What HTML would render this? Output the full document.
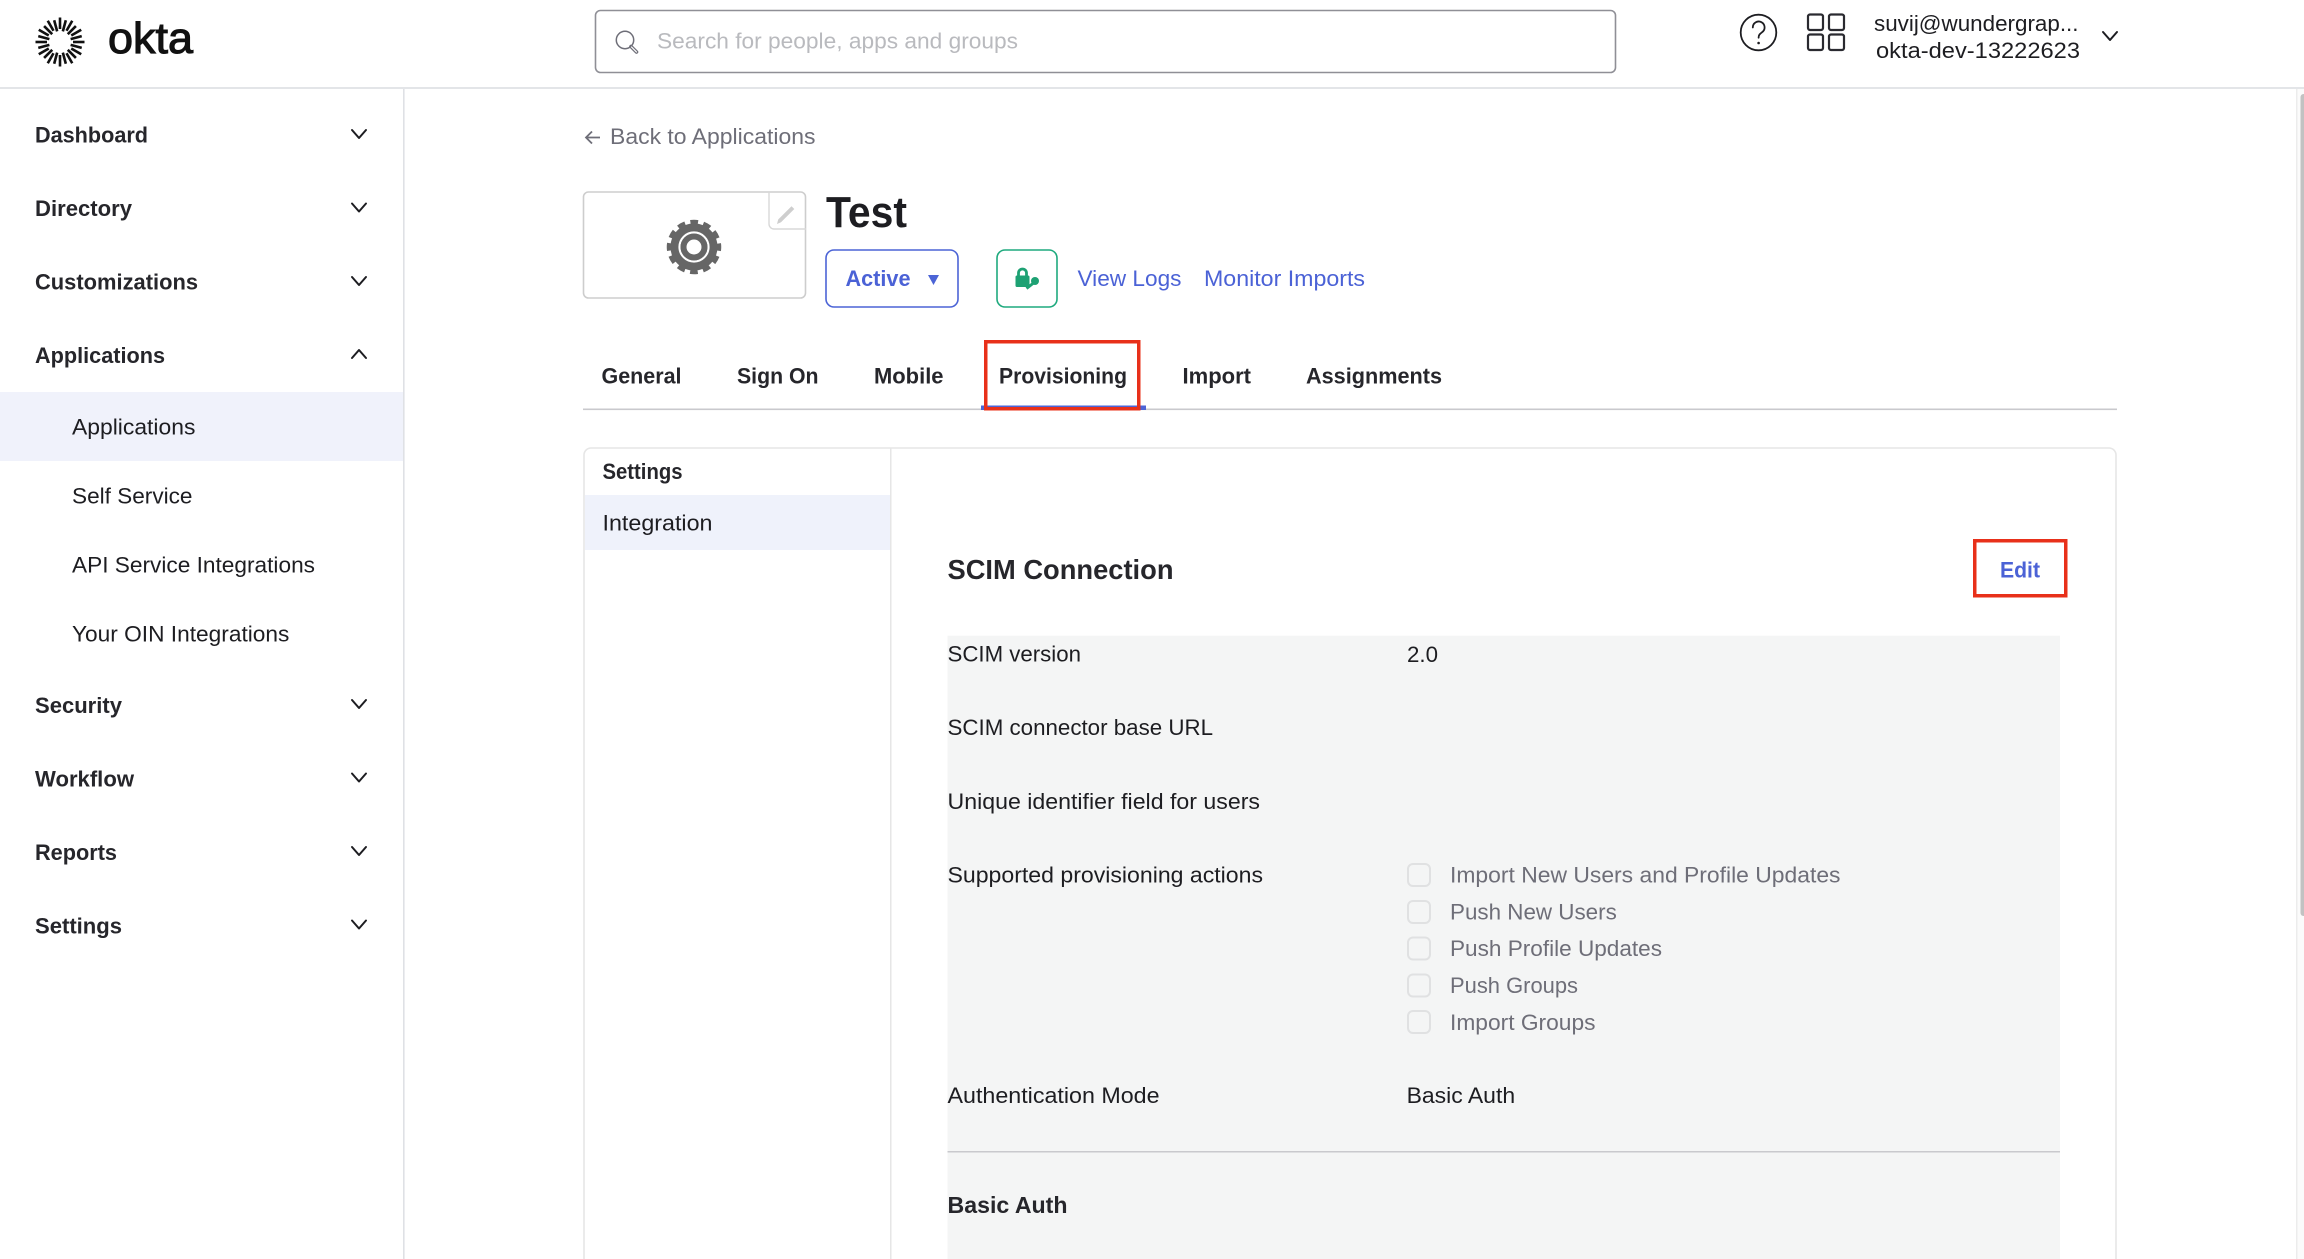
<!DOCTYPE html>
<html lang="en">
<head>
<meta charset="utf-8">
<title>Okta - Test Provisioning</title>
<style>
html,body{margin:0;padding:0;background:#fff;width:2304px;height:1259px;overflow:hidden}
svg{display:block}
text{font-family:"Liberation Sans",sans-serif;font-size:22px;fill:#1d1d21}
.b{font-weight:bold;fill:#26262b}
.g{fill:#6e6e78}
.l{fill:#4b62d6}
.b.l{fill:#4b62d6}
.c{fill:none;stroke:#1d1d21;stroke-width:2;stroke-linecap:round;stroke-linejoin:round}
.k{fill:#f4f5f5;stroke:#e0e1e2;stroke-width:2}
</style>
</head>
<body>
<svg width="2304" height="1259" viewBox="0 0 2304 1259" xmlns="http://www.w3.org/2000/svg">
<rect width="2304" height="1259" fill="#fff"/>

<!-- header -->
<rect x="0" y="87" width="2304" height="2" fill="#e3e5e8"/>
<g stroke="#111" stroke-width="2.6" stroke-linecap="butt">
<line x1="60" y1="29" x2="60" y2="17.5"/>
<line x1="60" y1="31" x2="60" y2="19.5" transform="rotate(15 60 42)"/>
<line x1="60" y1="29" x2="60" y2="17.5" transform="rotate(30 60 42)"/>
<line x1="60" y1="31" x2="60" y2="19.5" transform="rotate(45 60 42)"/>
<line x1="60" y1="29" x2="60" y2="17.5" transform="rotate(60 60 42)"/>
<line x1="60" y1="31" x2="60" y2="19.5" transform="rotate(75 60 42)"/>
<line x1="60" y1="29" x2="60" y2="17.5" transform="rotate(90 60 42)"/>
<line x1="60" y1="31" x2="60" y2="19.5" transform="rotate(105 60 42)"/>
<line x1="60" y1="29" x2="60" y2="17.5" transform="rotate(120 60 42)"/>
<line x1="60" y1="31" x2="60" y2="19.5" transform="rotate(135 60 42)"/>
<line x1="60" y1="29" x2="60" y2="17.5" transform="rotate(150 60 42)"/>
<line x1="60" y1="31" x2="60" y2="19.5" transform="rotate(165 60 42)"/>
<line x1="60" y1="29" x2="60" y2="17.5" transform="rotate(180 60 42)"/>
<line x1="60" y1="31" x2="60" y2="19.5" transform="rotate(195 60 42)"/>
<line x1="60" y1="29" x2="60" y2="17.5" transform="rotate(210 60 42)"/>
<line x1="60" y1="31" x2="60" y2="19.5" transform="rotate(225 60 42)"/>
<line x1="60" y1="29" x2="60" y2="17.5" transform="rotate(240 60 42)"/>
<line x1="60" y1="31" x2="60" y2="19.5" transform="rotate(255 60 42)"/>
<line x1="60" y1="29" x2="60" y2="17.5" transform="rotate(270 60 42)"/>
<line x1="60" y1="31" x2="60" y2="19.5" transform="rotate(285 60 42)"/>
<line x1="60" y1="29" x2="60" y2="17.5" transform="rotate(300 60 42)"/>
<line x1="60" y1="31" x2="60" y2="19.5" transform="rotate(315 60 42)"/>
<line x1="60" y1="29" x2="60" y2="17.5" transform="rotate(330 60 42)"/>
<line x1="60" y1="31" x2="60" y2="19.5" transform="rotate(345 60 42)"/>
</g>
<text x="108" y="53" style="font-size:44px;fill:#111;stroke:#111;stroke-width:1.1" textLength="85" lengthAdjust="spacingAndGlyphs">okta</text>

<rect x="595.5" y="10.500" width="1020" height="62" rx="5" fill="#fff" stroke="#8f8f96" stroke-width="1.600"/>
<circle cx="625" cy="40" r="8.700" fill="none" stroke="#6e6e78" stroke-width="1.500"/>
<path d="M631 46.500l5.500 5.500" fill="none" stroke="#6e6e78" stroke-width="3.600" stroke-linecap="round"/>
<path d="M631.500 47l5 5" fill="none" stroke="#fff" stroke-width="1.200" stroke-linecap="round"/>
<text x="657" y="48.500" style="fill:#b9babe" textLength="361" lengthAdjust="spacingAndGlyphs">Search for people, apps and groups</text>

<circle cx="1758.5" cy="32.500" r="17.800" fill="none" stroke="#1d1d21" stroke-width="1.800"/>
<path d="M1752.800 27.500a5.900 5.900 0 1 1 9.200 4.800c-2.200 1.600-3.400 2.600-3.400 5.400" fill="none" stroke="#1d1d21" stroke-width="1.800" stroke-linecap="round"/>
<circle cx="1758.600" cy="43" r="1.300" fill="#1d1d21"/>
<g fill="none" stroke="#2a2a30" stroke-width="2.200">
<rect x="1808" y="14.500" width="15" height="15.500" rx="2"/>
<rect x="1829" y="14.500" width="15" height="15.500" rx="2"/>
<rect x="1808" y="34.500" width="15" height="15.500" rx="2"/>
<rect x="1829" y="34.500" width="15" height="15.500" rx="2"/>
</g>
<text x="1874" y="31" textLength="204.500" lengthAdjust="spacingAndGlyphs">suvij@wundergrap...</text>
<text x="1876" y="58" textLength="204" lengthAdjust="spacingAndGlyphs">okta-dev-13222623</text>
<path class="c" d="M2103 32l7 8l7-8"/>

<!-- sidebar -->
<rect x="403" y="89" width="1.600" height="1170" fill="#dfe1e5"/>
<rect x="0" y="392" width="403" height="69" fill="#f0f2fb"/>
<text class="b" x="35" y="142.500" textLength="113" lengthAdjust="spacingAndGlyphs">Dashboard</text>
<text class="b" x="35" y="216" textLength="97" lengthAdjust="spacingAndGlyphs">Directory</text>
<text class="b" x="35" y="289.500" textLength="163" lengthAdjust="spacingAndGlyphs">Customizations</text>
<text class="b" x="35" y="363" textLength="130" lengthAdjust="spacingAndGlyphs">Applications</text>
<text x="72" y="434.300" textLength="123.400" lengthAdjust="spacingAndGlyphs">Applications</text>
<text x="72" y="503.300" textLength="120.500" lengthAdjust="spacingAndGlyphs">Self Service</text>
<text x="72" y="572.300" textLength="243" lengthAdjust="spacingAndGlyphs">API Service Integrations</text>
<text x="72" y="641.400" textLength="217.400" lengthAdjust="spacingAndGlyphs">Your OIN Integrations</text>
<text class="b" x="35" y="713" textLength="87" lengthAdjust="spacingAndGlyphs">Security</text>
<text class="b" x="35" y="786.600" textLength="99" lengthAdjust="spacingAndGlyphs">Workflow</text>
<text class="b" x="35" y="860" textLength="82" lengthAdjust="spacingAndGlyphs">Reports</text>
<text class="b" x="35" y="933.500" textLength="87" lengthAdjust="spacingAndGlyphs">Settings</text>
<g class="c">
<path d="M352 130l7 8l7-8"/>
<path d="M352 203.500l7 8l7-8"/>
<path d="M352 277l7 8l7-8"/>
<path d="M352 358l7-8l7 8"/>
<path d="M352 700l7 8l7-8"/>
<path d="M352 773.500l7 8l7-8"/>
<path d="M352 847l7 8l7-8"/>
<path d="M352 920.500l7 8l7-8"/>
</g>

<!-- scrollbar -->
<rect x="2296" y="89" width="8" height="1170" fill="#fbfbfb"/>
<rect x="2296" y="89" width="1.500" height="1170" fill="#ececec"/>
<rect x="2300.500" y="94" width="6" height="822" rx="3" fill="#c2c2c2"/>

<!-- page head -->
<path d="M600 137.500H586M592 131.500L586 137.500l6 6" fill="none" stroke="#6e6e78" stroke-width="1.800"/>
<text class="g" x="610" y="144" textLength="205.500" lengthAdjust="spacingAndGlyphs">Back to Applications</text>

<rect x="583.500" y="192" width="222" height="106" rx="5" fill="#fff" stroke="#cdcdcd" stroke-width="1.600"/>
<path d="M769 192v32a5 5 0 0 0 5 5h32" fill="none" stroke="#d8d8d8" stroke-width="1.400"/>
<path d="M777 224l1.200-4.500 13.300-13.300 2.800 2.800-13.300 13.300z" fill="#cecece"/>
<circle cx="694" cy="247" r="24.500" fill="none" stroke="#666" stroke-width="5.500" stroke-dasharray="7.500 5.330" stroke-dashoffset="3.750"/>
<circle cx="694" cy="247" r="18" fill="none" stroke="#666" stroke-width="11"/>
<circle cx="694" cy="247" r="14.500" fill="none" stroke="#fff" stroke-width="2.200"/>
<circle cx="694" cy="247" r="10.500" fill="none" stroke="#666" stroke-width="6"/>

<text class="b" x="826" y="227" style="font-size:44px;fill:#1d1d21" textLength="81" lengthAdjust="spacingAndGlyphs">Test</text>

<rect x="826" y="250" width="132" height="57" rx="8" fill="#fff" stroke="#4c64d6" stroke-width="1.600"/>
<text class="b l" x="845.500" y="286" textLength="65" lengthAdjust="spacingAndGlyphs">Active</text>
<path d="M928 275h11l-5.500 10z" fill="#4c64d6"/>

<rect x="997" y="250" width="60" height="57" rx="8" fill="#fff" stroke="#1faa7e" stroke-width="1.600"/>
<path d="M1018.500 277v-4a4 4 0 0 1 8 0v4" fill="none" stroke="#1da173" stroke-width="2.800"/>
<rect x="1015.500" y="275.500" width="14" height="11.500" rx="1.500" fill="#1da173"/>
<circle cx="1035" cy="281" r="4" fill="#1da173"/>
<path d="M1033.500 283l-7 5.500" stroke="#1da173" stroke-width="3" fill="none"/>

<text class="l" x="1077.500" y="286" textLength="104" lengthAdjust="spacingAndGlyphs">View Logs</text>
<text class="l" x="1204" y="286" textLength="161" lengthAdjust="spacingAndGlyphs">Monitor Imports</text>

<!-- tabs -->
<rect x="583" y="408.500" width="1534" height="1.600" fill="#c9c9cd"/>
<text class="b" x="601.500" y="383.500" textLength="80" lengthAdjust="spacingAndGlyphs">General</text>
<text class="b" x="737" y="383.500" textLength="81.500" lengthAdjust="spacingAndGlyphs">Sign On</text>
<text class="b" x="874" y="383.500" textLength="69.500" lengthAdjust="spacingAndGlyphs">Mobile</text>
<text class="b" x="999" y="383.500" textLength="128" lengthAdjust="spacingAndGlyphs">Provisioning</text>
<text class="b" x="1182.500" y="383.500" textLength="68.500" lengthAdjust="spacingAndGlyphs">Import</text>
<text class="b" x="1306" y="383.500" textLength="136" lengthAdjust="spacingAndGlyphs">Assignments</text>
<rect x="981" y="405.500" width="165" height="4.500" fill="#4c64d6"/>
<rect x="985.750" y="341.750" width="153" height="67" fill="none" stroke="#e8301a" stroke-width="3.500"/>

<!-- card -->
<path d="M584 1259V455a7 7 0 0 1 7-7h1518a7 7 0 0 1 7 7v804" fill="none" stroke="#e6e6e6" stroke-width="1.600"/>
<rect x="890" y="448" width="1.500" height="811" fill="#e6e6e6"/>
<rect x="585" y="495" width="305" height="55" fill="#eff2fb"/>
<text class="b" x="602.500" y="479" textLength="80" lengthAdjust="spacingAndGlyphs">Settings</text>
<text x="602.500" y="530.700" textLength="110" lengthAdjust="spacingAndGlyphs">Integration</text>

<text class="b" x="947.500" y="579" style="font-size:28px" textLength="226" lengthAdjust="spacingAndGlyphs">SCIM Connection</text>
<text class="b l" x="2000" y="577.500" textLength="40" lengthAdjust="spacingAndGlyphs">Edit</text>
<rect x="1974.750" y="540.750" width="91" height="55" fill="none" stroke="#e8301a" stroke-width="3.500"/>

<rect x="947.500" y="635.700" width="1112.500" height="623.300" fill="#f4f5f5"/>
<text x="947.500" y="661.700" textLength="133.500" lengthAdjust="spacingAndGlyphs">SCIM version</text>
<text x="1407" y="662" textLength="31" lengthAdjust="spacingAndGlyphs">2.0</text>
<text x="947.500" y="735" textLength="265.500" lengthAdjust="spacingAndGlyphs">SCIM connector base URL</text>
<text x="947.500" y="809" textLength="312.500" lengthAdjust="spacingAndGlyphs">Unique identifier field for users</text>
<text x="947.500" y="882.300" textLength="315.500" lengthAdjust="spacingAndGlyphs">Supported provisioning actions</text>

<rect class="k" x="1408" y="864" width="22" height="22" rx="5"/>
<rect class="k" x="1408" y="901" width="22" height="22" rx="5"/>
<rect class="k" x="1408" y="937.500" width="22" height="22" rx="5"/>
<rect class="k" x="1408" y="974.500" width="22" height="22" rx="5"/>
<rect class="k" x="1408" y="1011" width="22" height="22" rx="5"/>
<text class="g" x="1450" y="882.600" textLength="390.500" lengthAdjust="spacingAndGlyphs">Import New Users and Profile Updates</text>
<text class="g" x="1450" y="919.400" textLength="166.800" lengthAdjust="spacingAndGlyphs">Push New Users</text>
<text class="g" x="1450" y="956" textLength="212" lengthAdjust="spacingAndGlyphs">Push Profile Updates</text>
<text class="g" x="1450" y="993" textLength="128" lengthAdjust="spacingAndGlyphs">Push Groups</text>
<text class="g" x="1450" y="1029.800" textLength="145.500" lengthAdjust="spacingAndGlyphs">Import Groups</text>

<text x="947.500" y="1103" textLength="212" lengthAdjust="spacingAndGlyphs">Authentication Mode</text>
<text x="1406.600" y="1103" textLength="108.500" lengthAdjust="spacingAndGlyphs">Basic Auth</text>
<rect x="947.500" y="1151" width="1112.500" height="1.500" fill="#c9c9cd"/>
<text class="b" x="947.500" y="1213" style="font-size:23px" textLength="120" lengthAdjust="spacingAndGlyphs">Basic Auth</text>
</svg>
</body>
</html>
